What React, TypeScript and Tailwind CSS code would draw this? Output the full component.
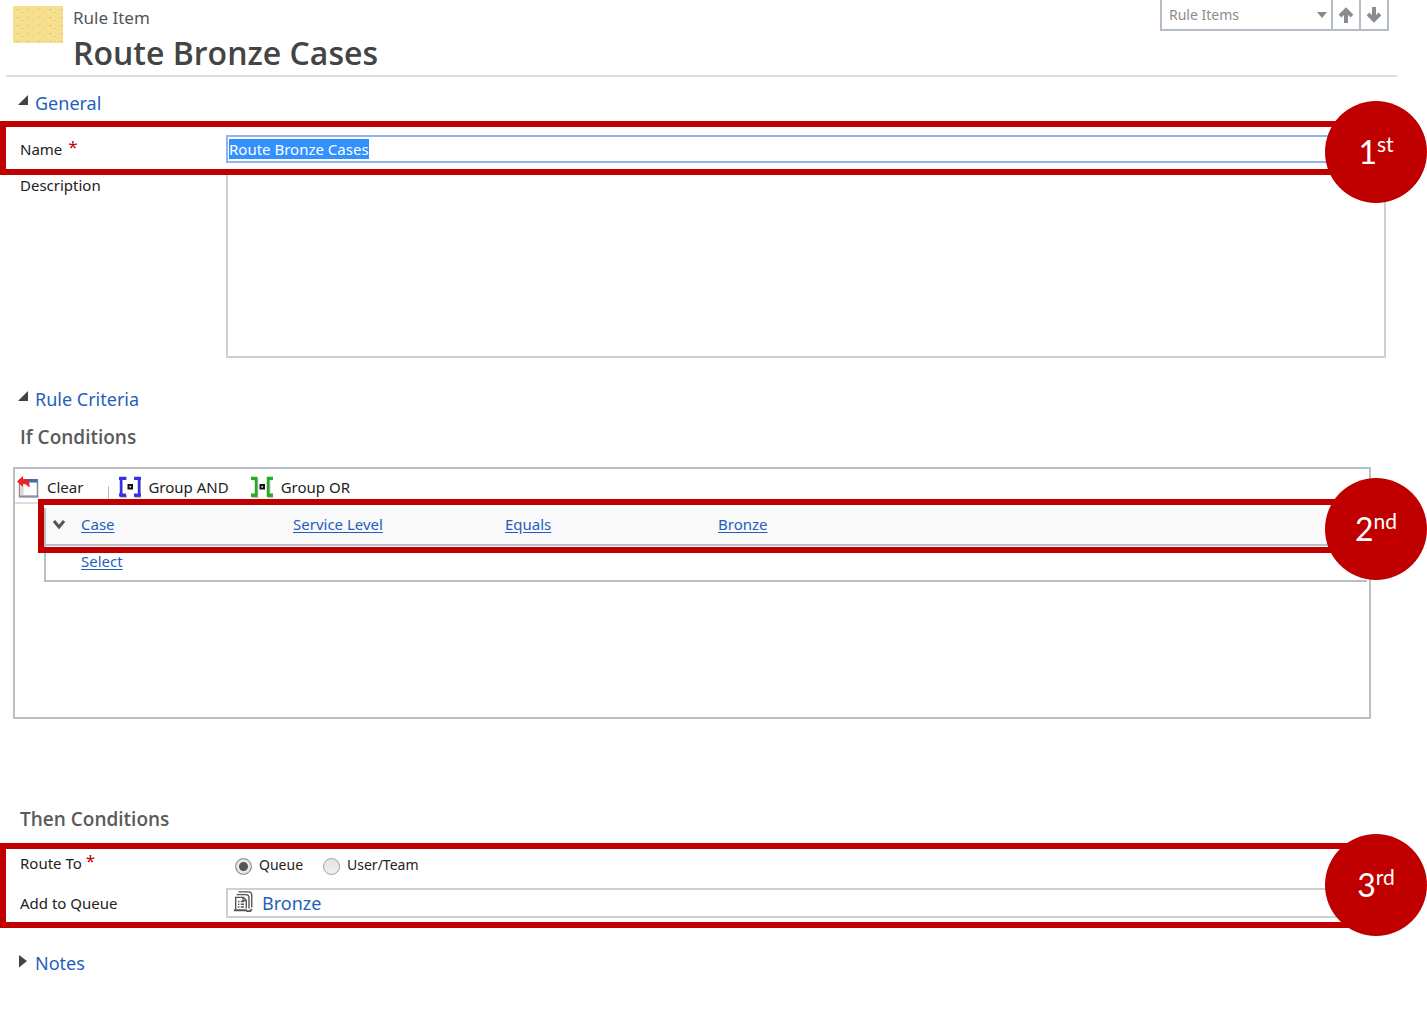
import { useEffect, useRef, type ReactNode } from "react";

function Badge({ number, suffix, className }: { number: string; suffix: string; className: string }) {
  return (
    <div className={`absolute -right-[57px] flex size-[102px] items-center justify-center rounded-full bg-[#c00000] font-['Lato',sans-serif] text-[32px] leading-8 text-white ${className}`}>
      <span className="flex items-start">
        {number}
        <span className="-mt-1 text-[21px] leading-6">{suffix}</span>
      </span>
    </div>
  );
}

function SectionTitle({ open, children }: { open: boolean; children: ReactNode }) {
  return (
    <h2>
      <button type="button" aria-expanded={open} className="flex h-7 items-center pl-[18px] text-[18px] leading-7 text-[#1f5fbd]">
        <svg viewBox="0 0 10 14" className="mr-[7px] mb-0.5 h-3.5 w-2.5" fill="#444" aria-hidden="true">
          {open ? <path d="M10 0v10H0z" /> : <path d="M1 0l8 6-8 6.500z" />}
        </svg>
        {children}
      </button>
    </h2>
  );
}

function ClearIcon() {
  return (
    <svg viewBox="0 0 22 22" className="h-[22px] w-[22px]" aria-hidden="true">
      <path d="M2.500 4h18v16.500h-18z" fill="#fdfdfd" stroke="#8b8d92" strokeWidth="1.500" />
      <path d="M3.500 8h3v11h-3z" fill="#ddd8c4" />
      <path d="M8 3h12.500v3.500H8z" fill="#4668a4" />
      <path d="M2 20.500h19.500" stroke="#8492a3" strokeWidth="2" />
      <path d="M0 5.500L6 0v3c5 0 7 2 6.500 8.500L9.500 9Q8 7.500 6 8v3z" fill="#ed2024" />
    </svg>
  );
}

function GroupAndIcon() {
  return (
    <svg viewBox="0 0 22 22" className="h-[22px] w-[22px]" fill="none" aria-hidden="true">
      <g stroke="#aaa" strokeWidth="2.500" transform="translate(1 1)">
        <path d="M7 1.500H1.500v18H7M15 1.500h5v18h-5" />
      </g>
      <g stroke="#3431e6">
        <path d="M7 2H2v17.500h5M15 2h5v17.500h-5" strokeWidth="2.500" />
        <path d="M0 2.500h7M0 19h7M15 2.500h7M15 19h7" strokeWidth="3" />
      </g>
      <path d="M9.500 9h3.500v3.500H9.500z" stroke="#111" strokeWidth="2" />
    </svg>
  );
}

function GroupOrIcon() {
  return (
    <svg viewBox="0 0 22 22" className="h-[22px] w-[22px]" fill="none" aria-hidden="true">
      <path d="M1 3h5v17.500H1M22 3h-4v17.500h4" stroke="#aaa" strokeWidth="2.500" />
      <g stroke="#24ae24">
        <path d="M0 2h5v17.500H0M22 2h-5v17.500h5" strokeWidth="2.500" />
        <path d="M0 2.500h6M0 19h6M16 2.500h6M16 19h6" strokeWidth="3" />
      </g>
      <path d="M9.500 9H13v3.500H9.500z" stroke="#111" strokeWidth="2" />
    </svg>
  );
}

function QueueIcon() {
  return (
    <svg viewBox="0 0 21 24" className="h-6 w-[21px] pb-0.5" fill="none" stroke="#555" strokeWidth="1.500" aria-hidden="true">
      <path d="M5 1h11q3.500 0 3.500 3.500V18" />
      <path d="M3 4h10q3.500 0 3.500 3.500V19" />
      <path d="M2 20V7h8.500l3 3v9" />
      <path d="M10 7v3.500h3.500" />
      <path d="M4.500 11.500H6M7.500 11.500H11M4.500 14.500H6M7.500 14.500H11M4.500 17.500H6M7.500 17.500H11" />
      <path d="M0 21h13l1.500 1h3.500l1.500-2.500" strokeWidth="2" />
    </svg>
  );
}

const radioClass =
  "mt-0.5 size-[17px] appearance-none rounded-full border border-[#a0a0a0] bg-linear-to-b from-[#e2e2e2] to-[#f0f0f0] checked:bg-[#555] checked:bg-none checked:shadow-[inset_0_0_0_3px_#e8e8e8]";
const linkClass = "text-[#1f5fbd] underline underline-offset-2";

export default function App() {
  const nameRef = useRef<HTMLInputElement>(null);
  useEffect(() => {
    nameRef.current?.focus();
    nameRef.current?.select();
  }, []);

  return (
    <main className="min-h-screen overflow-hidden bg-white font-['Noto_Sans','Open_Sans',sans-serif] text-[15px] leading-5 text-[#222]">
      <header className="mr-[30px] ml-1.5 flex h-[77px] border-b-2 border-[#dcdcdc] pl-[7px]">
        <svg viewBox="0 0 50 37" className="mt-1.5 h-[37px] w-[50px]" aria-hidden="true">
          <defs>
            <pattern id="weave" width="4" height="4" patternUnits="userSpaceOnUse">
              <path d="M0 0h4v4H0z" fill="#f8e08f" />
              <path d="M0 0h1v1H0zM2 2h1v1H2z" fill="#dce08b" />
            </pattern>
            <pattern id="dots" width="11" height="8" patternUnits="userSpaceOnUse">
              <path d="M3 3h3v1H3zM8 6h2v1H8z" fill="#f8c088" />
            </pattern>
          </defs>
          <path d="M0 0h50v37H0z" fill="url(#weave)" />
          <path d="M0 0h50v37H0z" fill="url(#dots)" />
        </svg>
        <div className="flex-1 pt-2 pl-2.5">
          <p className="text-[17px] leading-5 text-[#555]">Rule Item</p>
          <h1 className="pt-[5px] font-['Open_Sans',sans-serif] text-[32px] leading-10 font-semibold text-[#444]">Route Bronze Cases</h1>
        </div>
        <div className="mr-2 flex h-[31px] border-2 border-t-0 border-[#b4bdc7]">
          <div className="relative">
            <select aria-label="Related records" className="h-full w-[169px] appearance-none pl-[7px] text-[14px] text-[#8c8c8c]">
              <option>Rule Items</option>
            </select>
            <svg viewBox="0 0 10 6" className="pointer-events-none absolute top-3 right-1 h-1.5 w-2.5" fill="#888" aria-hidden="true">
              <path d="M0 0h10L5 6z" />
            </svg>
          </div>
          <button type="button" aria-label="Previous" className="flex w-7 items-center justify-center border-l-2 border-[#b4bdc7]">
            <svg viewBox="0 0 14 16" className="h-4 w-3.5" fill="none" stroke="#8c8c8c" strokeWidth="4" aria-hidden="true">
              <path d="M7 16V3M1 9l6-6 6 6" />
            </svg>
          </button>
          <button type="button" aria-label="Next" className="flex w-7 items-center justify-center border-l-2 border-[#b4bdc7]">
            <svg viewBox="0 0 14 16" className="h-4 w-3.5" fill="none" stroke="#8c8c8c" strokeWidth="4" aria-hidden="true">
              <path d="M7 0v13M1 7l6 6 6-6" />
            </svg>
          </button>
        </div>
      </header>

      <section className="pt-3">
        <SectionTitle open>General</SectionTitle>
        <div className="relative z-10 mt-1 mr-[51px] flex h-[54px] items-center border-6 border-[#c00000] pt-0.5 pl-3.5">
          <label htmlFor="name" className="flex w-[206px] gap-1.5">
            Name <span className="text-[17px] leading-4 text-[#c00000]">*</span>
          </label>
          <input
            id="name"
            ref={nameRef}
            defaultValue="Route Bronze Cases"
            className="h-7 flex-1 border-2 border-[#8fb4ee] px-px outline-none selection:bg-[#3390ff] selection:text-white"
          />
          <Badge number="1" suffix="st" className="-top-[26px]" />
        </div>
        <div className="mr-[41px] flex pl-5">
          <label htmlFor="description" className="w-[206px]">Description</label>
          <textarea id="description" className="block h-[183px] flex-1 resize-none border-2 border-t-0 border-[#d0d0d0] outline-none" />
        </div>
      </section>

      <section className="pt-[27px]">
        <SectionTitle open>Rule Criteria</SectionTitle>
        <h3 className="pt-2.5 pl-5 font-['Open_Sans',sans-serif] text-[19px] leading-7 font-semibold text-[#5a5a5a]">If Conditions</h3>
        <div className="relative mt-4 mr-14 ml-[13px] h-[252px] border-2 border-[#b9bec7]">
          <div className="flex h-[35px] items-center border-b-2 border-[#dedede] pt-0.5 pl-0.5">
            <button type="button" className="flex items-center gap-2"><ClearIcon />Clear</button>
            <span className="mr-2.5 ml-[25px] h-4 w-px self-end bg-[#b4bdc7]" />
            <button type="button" className="flex items-center gap-[7px]"><GroupAndIcon />Group AND</button>
            <button type="button" className="ml-[22px] flex items-center gap-2"><GroupOrIcon />Group OR</button>
          </div>
          <div className="mt-1 mr-0.5 ml-[29px] border-l-2 border-[#b9bec7]">
            <table className="w-full table-fixed border-collapse">
              <colgroup>
                <col className="w-[35px]" />
                <col className="w-[212px]" />
                <col className="w-[212px]" />
                <col className="w-[213px]" />
                <col />
              </colgroup>
              <tbody>
                <tr className="h-[37px] border-b-2 border-[#b9bec7] bg-[#f9f9f9]">
                  <td className="pb-1">
                    <button type="button" aria-label="Row options" className="ml-[7px] block">
                      <svg viewBox="0 0 12 10" className="h-2.5 w-3" fill="none" stroke="#555" strokeWidth="3" aria-hidden="true">
                        <path d="M1 2l5 6 5-6" />
                      </svg>
                    </button>
                  </td>
                  <td className="pb-1"><a href="#case" className={linkClass}>Case</a></td>
                  <td className="pb-1"><a href="#service-level" className={linkClass}>Service Level</a></td>
                  <td className="pb-1"><a href="#equals" className={linkClass}>Equals</a></td>
                  <td className="pb-1"><a href="#bronze" className={linkClass}>Bronze</a></td>
                </tr>
                <tr className="h-9 border-b-2 border-[#b9bec7]">
                  <td />
                  <td colSpan={4} className="pb-1"><a href="#select" className={linkClass}>Select</a></td>
                </tr>
              </tbody>
            </table>
          </div>
          <div className="pointer-events-none absolute top-[30px] -right-[7px] left-[23px] h-[54px] border-6 border-[#c00000]">
            <Badge number="2" suffix="nd" className="-top-[27px]" />
          </div>
        </div>
      </section>

      <section className="pt-[86px]">
        <h3 className="pl-5 font-['Open_Sans',sans-serif] text-[19px] leading-7 font-semibold text-[#5a5a5a]">Then Conditions</h3>
        <div className="relative mt-2.5 mr-[51px] h-[85px] border-6 border-[#c00000] pl-3.5">
          <div role="radiogroup" aria-labelledby="route-to" className="flex h-8 items-center">
            <span id="route-to" className="flex w-[206px] gap-1 pb-1">
              Route To <span className="text-[17px] leading-4 text-[#c00000]">*</span>
            </span>
            <label className="ml-[9px] flex items-center gap-[7px] text-[14px]">
              <input type="radio" name="route" defaultChecked className={radioClass} />Queue
            </label>
            <label className="ml-5 flex items-center gap-[7px] text-[14px]">
              <input type="radio" name="route" className={radioClass} />User/Team
            </label>
          </div>
          <div className="mt-[7px] flex items-center">
            <span className="w-[206px]">Add to Queue</span>
            <div className="flex h-[30px] flex-1 items-center gap-2 border-2 border-[#d0d0d0] pl-[5px]">
              <QueueIcon />
              <a href="#queue" className="text-[18px] leading-6 text-[#1f5fbd]">Bronze</a>
            </div>
          </div>
          <Badge number="3" suffix="rd" className="-top-[15px]" />
        </div>
      </section>

      <section className="pt-[21px]">
        <SectionTitle open={false}>Notes</SectionTitle>
      </section>
    </main>
  );
}
